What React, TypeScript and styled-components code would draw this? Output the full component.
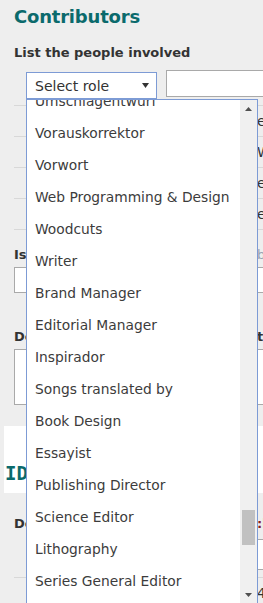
import React from "react";
import styled, { createGlobalStyle } from "styled-components";

const roles = [
  "Umschlagentwurf",
  "Vorauskorrektor",
  "Vorwort",
  "Web Programming & Design",
  "Woodcuts",
  "Writer",
  "Brand Manager",
  "Editorial Manager",
  "Inspirador",
  "Songs translated by",
  "Book Design",
  "Essayist",
  "Publishing Director",
  "Science Editor",
  "Lithography",
  "Series General Editor",
  "Translator",
];

const contributors = ["editor", "Wolfgang", "ed.", "essays"];

export default function App() {
  return (
    <>
      <GlobalStyle />
      <Page>
        <Section>
          <Title>Contributors</Title>
          <Label>List the people involved</Label>

          <RoleRow>
            <SelectWrap>
              <SelectBox>
                <span>Select role</span>
                <svg width="7" height="6" viewBox="0 0 7 6">
                  <path d="M0 0 H7 L3.5 5 Z" fill="#333" />
                </svg>
              </SelectBox>

              <Dropdown>
                <Viewport>
                  <OptionList>
                    {roles.map((r) => (
                      <Option key={r}>{r}</Option>
                    ))}
                  </OptionList>
                </Viewport>
                <Scrollbar>
                  <ArrowButton>
                    <svg width="7" height="4" viewBox="0 0 7 4">
                      <path d="M0 4 H7 L3.5 0 Z" fill="#505050" />
                    </svg>
                  </ArrowButton>
                  <Track>
                    <Thumb $top={393} $height={35} />
                  </Track>
                  <ArrowButton>
                    <svg width="7" height="4" viewBox="0 0 7 4">
                      <path d="M0 0 H7 L3.5 4 Z" fill="#505050" />
                    </svg>
                  </ArrowButton>
                </Scrollbar>
              </Dropdown>
            </SelectWrap>
            <NameInput />
          </RoleRow>

          <Table>
            {contributors.map((c) => (
              <Row key={c}>
                <span />
                <span>{c}</span>
              </Row>
            ))}
          </Table>

          <FieldLabel $gap={17}>
            <span>Is this a translation?</span>
            <Hint>blank if unknown</Hint>
          </FieldLabel>
          <TextBox $height={26} />

          <FieldLabel $gap={36}>
            <span>Description</span>
            <span>that's all</span>
          </FieldLabel>
          <TextBox $height={56} />
        </Section>

        <Band>
          <BandTitle>IDENTIFIERS</BandTitle>
        </Band>

        <Section>
          <FieldLabel $gap={23}>
            <span>Default language</span>
            <Accent>:lang</Accent>
          </FieldLabel>
          <LangRow>
            <TextBox $height={31} />
          </LangRow>
          <Row>
            <span />
            <span>4</span>
          </Row>
        </Section>
      </Page>
    </>
  );
}

const GlobalStyle = createGlobalStyle`
  html, body {
    margin: 0;
    overflow: hidden;
    background: #eeeeee;
  }
  body {
    font-family: "DejaVu Sans", Verdana, sans-serif;
    color: #333;
  }
`;

const Page = styled.div`
  width: 340px;
  min-height: 603px;
  padding-left: 4px;
`;

const Section = styled.div`
  padding-left: 10px;
`;

const Title = styled.h2`
  margin: 0;
  padding-top: 6px;
  font-size: 18px;
  line-height: 21px;
  letter-spacing: -0.2px;
  color: #0b6a6c;
`;

const Label = styled.div`
  margin-top: 18px;
  font-size: 13px;
  line-height: 15px;
  font-weight: bold;
  color: #333;
`;

const RoleRow = styled.div`
  display: flex;
  align-items: flex-start;
  gap: 9px;
  margin-top: 10px;
  padding-left: 12px;
`;

const SelectWrap = styled.div`
  position: relative;
  margin-top: 2px;
`;

const SelectBox = styled.div`
  box-sizing: border-box;
  width: 131px;
  height: 27px;
  border: 1px solid #7d9bd5;
  background: #fff;
  display: flex;
  align-items: center;
  justify-content: space-between;
  padding: 0 7px 0 8px;
  font-size: 14px;
  color: #333;
`;

const Dropdown = styled.div`
  position: absolute;
  top: 100%;
  left: 0;
  z-index: 2;
  box-sizing: border-box;
  width: 232px;
  height: 505px;
  border: 1px solid #7d9bd5;
  background: #fff;
  display: flex;
`;

const Viewport = styled.div`
  flex: 1;
  overflow: hidden;
`;

const OptionList = styled.div`
  margin-top: -15px;
`;

const Option = styled.div`
  height: 32px;
  line-height: 32px;
  padding-left: 8px;
  font-size: 13.8px;
  color: #3c3c3c;
  white-space: nowrap;
`;

const Scrollbar = styled.div`
  width: 17px;
  background: #f0f0f0;
  display: flex;
  flex-direction: column;
`;

const ArrowButton = styled.div`
  height: 17px;
  display: flex;
  align-items: center;
  justify-content: center;
`;

const Track = styled.div`
  flex: 1;
`;

const Thumb = styled.div<{ $top: number; $height: number }>`
  margin: ${(p) => p.$top}px 2px 0;
  height: ${(p) => p.$height}px;
  background: #c1c1c1;
`;

const NameInput = styled.div`
  flex: 1;
  height: 27px;
  box-sizing: border-box;
  border: 1px solid #a9a9a9;
  background: #fff;
`;

const Table = styled.div`
  margin-top: 6px;
  border-top: 1px solid #d8d8d8;
`;

const Row = styled.div`
  display: grid;
  grid-template-columns: 243px 1fr;
  align-items: center;
  height: 30px;
  font-size: 14px;
  color: #333;
  border-bottom: 1px solid #d8d8d8;
`;

const FieldLabel = styled.div<{ $gap: number }>`
  display: grid;
  grid-template-columns: 243px 1fr;
  margin-top: ${(p) => p.$gap}px;
  font-size: 13px;
  line-height: 15px;
  font-weight: bold;
  white-space: nowrap;

  & > span {
    overflow: hidden;
  }
`;

const Hint = styled.span`
  font-weight: normal;
  color: #9aa4b4;
`;

const Accent = styled.span`
  color: #8b1a1a;
`;

const TextBox = styled.div<{ $height: number }>`
  box-sizing: border-box;
  margin-top: 5px;
  height: ${(p) => p.$height}px;
  border: 1px solid #a9a9a9;
  background: #fff;
`;

const Band = styled.div`
  box-sizing: border-box;
  margin-top: 21px;
  height: 67px;
  padding: 37px 0 0 1px;
  background: #fff;
`;

const BandTitle = styled.h2`
  margin: 0;
  font-family: "DejaVu Sans Mono", "Liberation Mono", monospace;
  font-size: 19px;
  font-weight: bold;
  line-height: 21px;
  white-space: nowrap;
  color: #0b6a6c;
`;

const LangRow = styled.div`
  padding: 3px 0 7px 100px;
  border-bottom: 1px solid #d8d8d8;
`;
